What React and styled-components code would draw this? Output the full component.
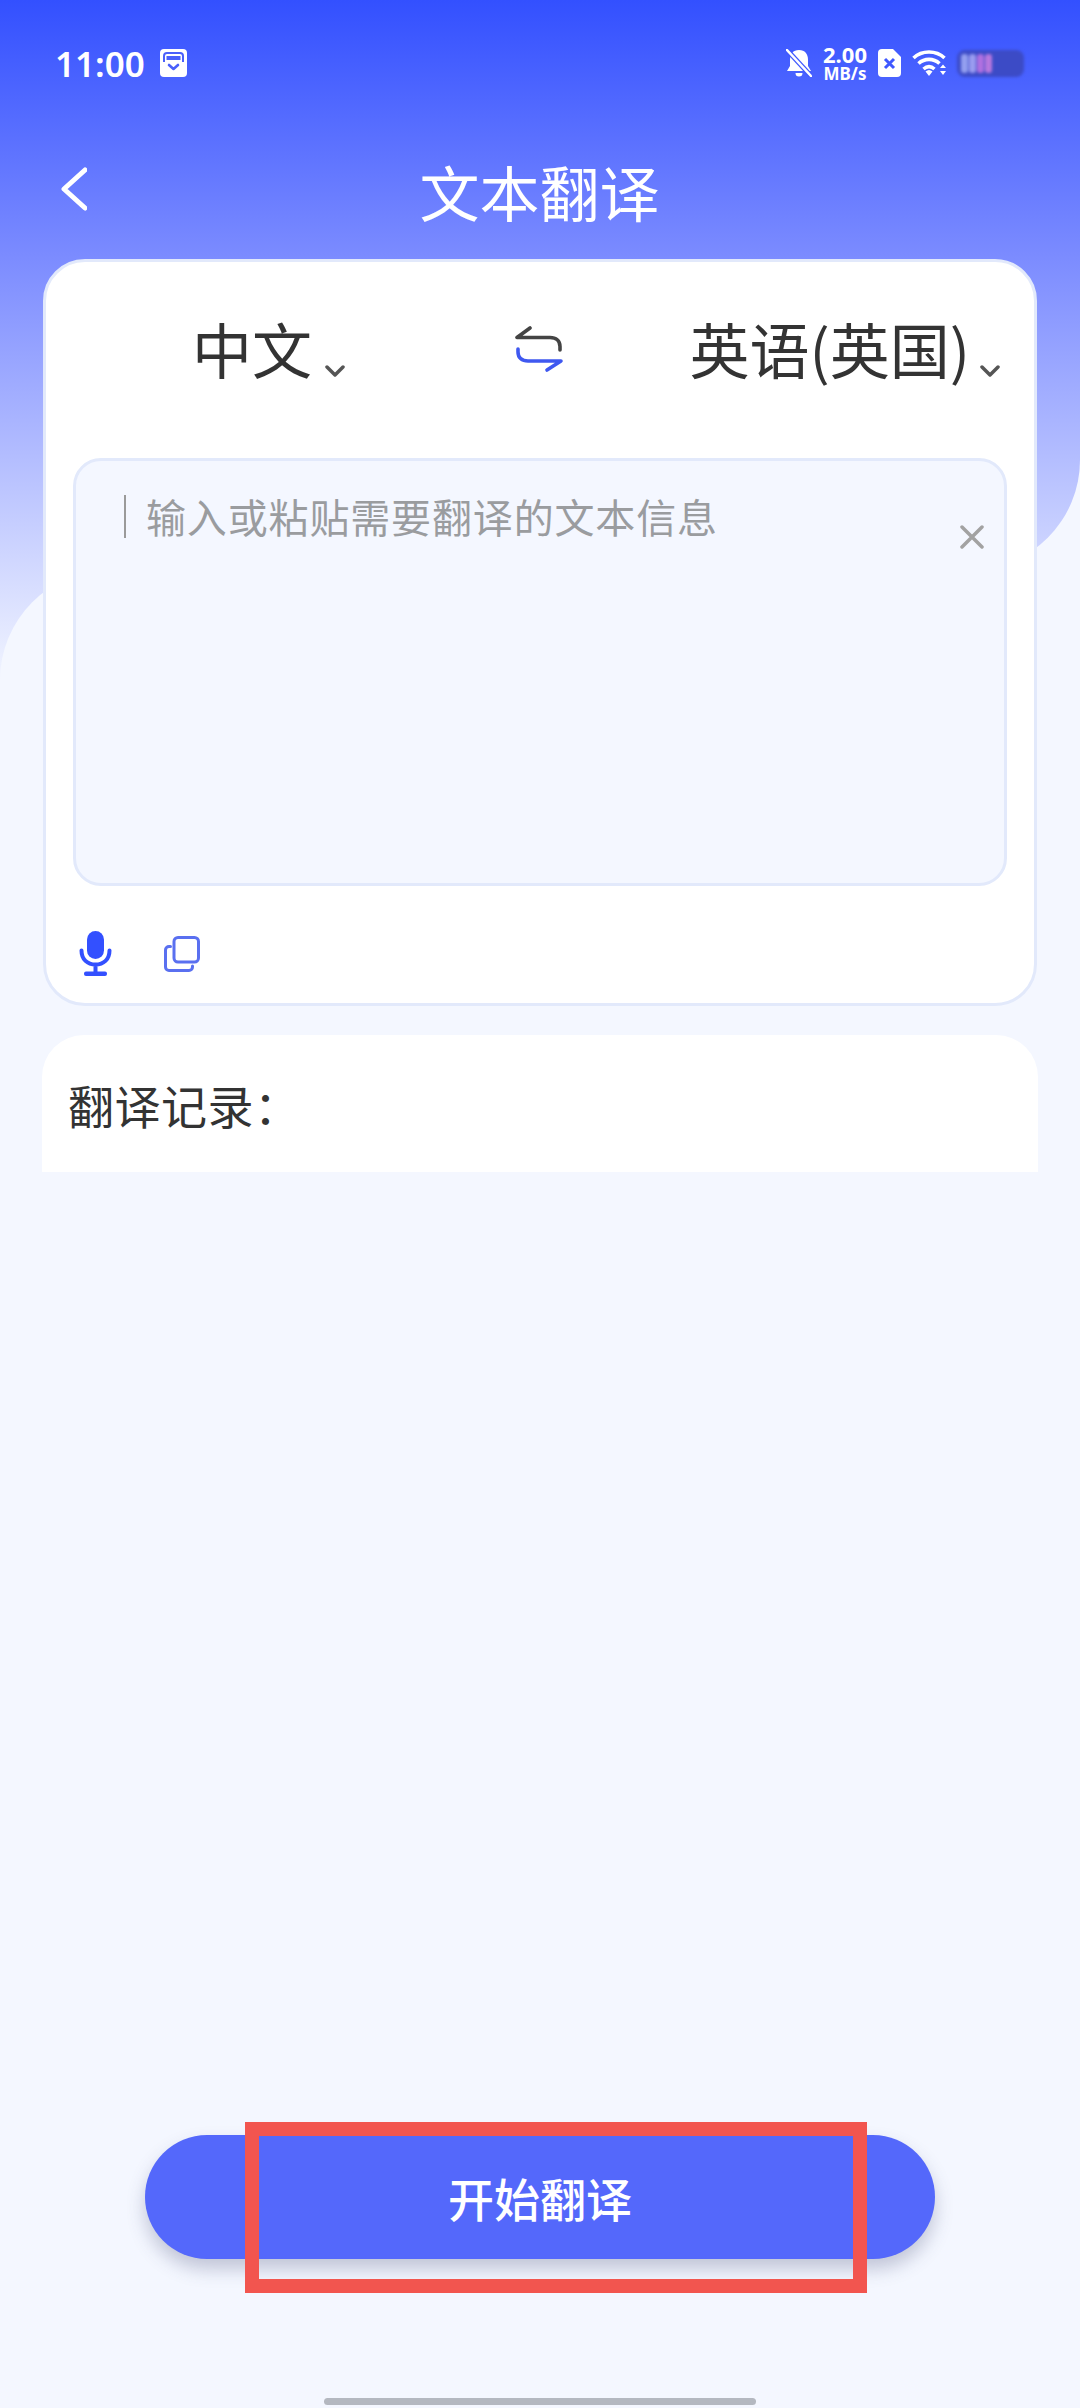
import React from "react";
import styled, { createGlobalStyle } from "styled-components";

const Global = createGlobalStyle`
  html, body { margin: 0; padding: 0; background: #f4f7ff; }
  * { box-sizing: border-box; }
  body { font-family: "Noto Sans CJK SC", "Noto Sans", sans-serif; }
`;

const SKY = "linear-gradient(180deg, #3350ff 0, #7b8bff 255px, #f4f7ff 690px)";

const Page = styled.div`
  position: relative;
  width: 1080px;
  height: 2408px;
  overflow: hidden;
  display: flex;
  flex-direction: column;
  background: #f4f7ff;
`;

const SkyBand = styled.div`
  position: absolute;
  top: 0;
  left: 0;
  width: 100%;
  height: 570px;
  background: ${SKY};
  background-size: 100% 690px;
  background-repeat: no-repeat;
  border-bottom-right-radius: 110px;
`;
const SkyEdge = styled.div`
  position: absolute;
  top: 0;
  left: 0;
  width: 200px;
  height: 690px;
  background: ${SKY};
`;
const LowerPanel = styled.div`
  position: absolute;
  top: 570px;
  left: 0;
  right: 0;
  bottom: 0;
  background: #f4f7ff;
  border-top-left-radius: 110px;
`;

const Content = styled.div`
  position: relative;
  flex: 1;
  display: flex;
  flex-direction: column;
`;

const StatusBar = styled.div`
  height: 126px;
  padding: 0 56px 0 55px;
  display: flex;
  align-items: center;
  color: #fff;
`;
const Clock = styled.span`
  font-family: "Noto Sans", sans-serif;
  font-weight: 600;
  font-size: 35px;
  line-height: 1;
`;
const StatusLeftIcon = styled.svg`
  display: block;
  margin-left: 15px;
`;
const StatusRight = styled.div`
  margin-left: auto;
  display: flex;
  align-items: center;
`;
const Speed = styled.div`
  margin: 0 11px;
  width: 44px;
  display: flex;
  flex-direction: column;
  align-items: center;
  font-family: "Noto Sans", sans-serif;
  font-weight: 700;
  line-height: 1;
`;
const SpeedValue = styled.span`
  font-size: 22px;
  line-height: 21px;
`;
const SpeedUnit = styled.span`
  font-size: 17px;
  line-height: 17px;
`;
const StatusGlyph = styled.svg`
  display: block;
  margin-left: ${(p) => p.$gap || 0}px;
`;
const Battery = styled.div`
  margin-left: 10px;
  width: 67px;
  height: 27px;
  padding: 4px 4px;
  border-radius: 8px;
  background: #3c4bc6;
  display: flex;
  gap: 1px;
  filter: blur(1.4px);
`;
const BatteryCell = styled.span`
  width: 7px;
  border-radius: 3px;
  background: ${(p) => p.$color};
`;

const Header = styled.header`
  height: 133px;
  padding-left: 61px;
  display: grid;
  grid-template-columns: 1fr auto 1fr;
  align-items: center;
`;
const BackIcon = styled.svg`
  display: block;
  margin-bottom: 8px;
`;
const Title = styled.h1`
  margin: 0 0 3px;
  color: #fff;
  font-size: 60px;
  font-weight: 400;
  line-height: 1;
  transform: translateX(-31px);
`;

const Card = styled.section`
  margin: 0 43px;
  height: 747px;
  background: #fff;
  border: 3px solid #e2e9fb;
  border-radius: 42px;
`;
const LangRow = styled.div`
  height: 172px;
  margin-bottom: 24px;
  padding: 0 34px 0 146px;
  display: flex;
  align-items: center;
`;
const Lang = styled.div`
  display: flex;
  align-items: flex-end;
  gap: ${(p) => p.$gap}px;
  color: #333;
  font-size: 60px;
  line-height: 70px;
`;
const LangChevron = styled.svg`
  display: block;
  margin-bottom: 6px;
`;
const SwapIcon = styled.svg`
  display: block;
  margin: 2px auto 0 170px;
`;
const InputBox = styled.div`
  margin: 0 27px;
  height: 428px;
  padding: 34px 20px 0 48px;
  background: #f4f7ff;
  border: 3px solid #e2e9fb;
  border-radius: 28px;
  display: flex;
  align-items: flex-start;
`;
const Caret = styled.span`
  width: 2px;
  height: 43px;
  background: #9a9a9a;
`;
const Placeholder = styled.span`
  margin-left: 20px;
  color: #9a9c9f;
  font-size: 40px;
  letter-spacing: 0.85px;
  line-height: 43px;
`;
const ClearIcon = styled.svg`
  display: block;
  margin: 30px 0 0 auto;
`;
const Toolbar = styled.div`
  margin-top: 45px;
  padding-left: 33px;
  display: flex;
  align-items: flex-start;
  gap: 52px;
`;
const ToolIcon = styled.svg`
  display: block;
  margin-top: ${(p) => p.$top || 0}px;
`;

const RecordCard = styled.section`
  margin: 29px 42px 0;
  height: 137px;
  padding: 39px 0 0 26px;
  background: #fff;
  border-radius: 42px 42px 0 0;
`;
const RecordTitle = styled.h2`
  margin: 0;
  color: #333;
  font-size: 46px;
  font-weight: 400;
  line-height: 60px;
  letter-spacing: 0.5px;
`;

const Footer = styled.div`
  margin-top: auto;
  padding-bottom: 3px;
  display: flex;
  flex-direction: column;
  align-items: center;
`;
const StartButton = styled.button`
  position: relative;
  width: 790px;
  height: 124px;
  border: 0;
  padding: 0;
  border-radius: 62px;
  background: #5468fb;
  box-shadow: 0 10px 18px rgba(60, 70, 110, 0.28);
  color: #fff;
  font-family: inherit;
  font-size: 46px;
  font-weight: 500;
  line-height: 1;
`;
const Highlight = styled.span`
  position: absolute;
  left: 100px;
  top: -13px;
  width: 622px;
  height: 171px;
  border: 14px solid #f2554f;
  pointer-events: none;
`;
const HomeBar = styled.div`
  margin-top: 139px;
  width: 432px;
  height: 7px;
  border-radius: 4px;
  background: #b4b8c0;
`;

export default function App() {
  return (
    <Page>
      <Global />
      <SkyEdge />
      <SkyBand />
      <LowerPanel />
      <Content>
        <StatusBar>
          <Clock>11:00</Clock>
          <StatusLeftIcon width="27" height="28" viewBox="0 0 27 28">
            <rect width="27" height="28" rx="4" fill="#fff" />
            <path d="M4 13V7a3 3 0 0 1 3-3h13a3 3 0 0 1 3 3v6" fill="none" stroke="#4a60fb" strokeWidth="2" />
            <rect x="6.5" y="7" width="14" height="4" fill="#4a60fb" />
            <path d="M9 16l4.500 4 4.500-4" fill="none" stroke="#4a60fb" strokeWidth="2.600" strokeLinecap="round" strokeLinejoin="round" />
          </StatusLeftIcon>
          <StatusRight>
            <StatusGlyph width="26" height="28" viewBox="0 0 26 28">
              <path d="M13 1c6 0 9 4 9 10v6l3 5H1l3-5v-6C4 5 7 1 13 1zM9.500 24h7a3.500 3.500 0 0 1-7 0z" fill="#fff" />
              <path d="M1 1l24 26" stroke="#3f58ff" strokeWidth="5" />
              <path d="M0 0l26 28" stroke="#fff" strokeWidth="2.500" />
            </StatusGlyph>
            <Speed>
              <SpeedValue>2.00</SpeedValue>
              <SpeedUnit>MB/s</SpeedUnit>
            </Speed>
            <StatusGlyph width="23" height="28" viewBox="0 0 23 28">
              <path d="M4 0h11l8 8v16a4 4 0 0 1-4 4H4a4 4 0 0 1-4-4V4a4 4 0 0 1 4-4z" fill="#fff" />
              <path d="M7 10l9 9M16 10l-9 9" stroke="#3f58ff" strokeWidth="3" />
            </StatusGlyph>
            <StatusGlyph $gap={11} width="35" height="28" viewBox="0 0 35 28">
              <path d="M1.500 9C10 1 24 1 32.500 9M6.500 14.500c6-5.500 15-5.500 21 0M11.500 20c3.500-3 7.500-3 11 0" fill="none" stroke="#fff" strokeWidth="3.600" />
              <path d="M13.500 22.500c2.500-2 4.500-2 7 0L17 27z" fill="#fff" />
              <path d="M28 19l3-3.500 3 3.500zM28 22h6l-3 4z" fill="#fff" />
            </StatusGlyph>
            <Battery>
              <BatteryCell $color="#949ff0" />
              <BatteryCell $color="#9a9cf0" />
              <BatteryCell $color="#b070e0" />
              <BatteryCell $color="#b878de" />
            </Battery>
          </StatusRight>
        </StatusBar>
        <Header>
          <BackIcon width="26" height="44" viewBox="0 0 26 44">
            <path d="M24 3L3 22l21 19" fill="none" stroke="#fff" strokeWidth="5" strokeLinecap="round" strokeLinejoin="round" />
          </BackIcon>
          <Title>文本翻译</Title>
        </Header>
        <Card>
          <LangRow>
            <Lang $gap={13}>
              中文
              <LangChevron width="20" height="12" viewBox="0 0 20 12">
                <path d="M2 2l8 8 8-8" fill="none" stroke="#555" strokeWidth="3.500" strokeLinecap="round" strokeLinejoin="round" />
              </LangChevron>
            </Lang>
            <SwapIcon width="48" height="47" viewBox="0 0 48 47">
              <path d="M15 2L2 11.500h33c6 0 10 3 10 9V24" fill="none" stroke="#444" strokeWidth="3.600" strokeLinecap="round" strokeLinejoin="round" />
              <path d="M3 23v3c0 6 4 9 10 9h33L32 44" fill="none" stroke="#3f58f0" strokeWidth="3.600" strokeLinecap="round" strokeLinejoin="round" />
            </SwapIcon>
            <Lang $gap={10}>
              英语(英国)
              <LangChevron width="20" height="12" viewBox="0 0 20 12">
                <path d="M2 2l8 8 8-8" fill="none" stroke="#555" strokeWidth="3.500" strokeLinecap="round" strokeLinejoin="round" />
              </LangChevron>
            </Lang>
          </LangRow>
          <InputBox>
            <Caret />
            <Placeholder>输入或粘贴需要翻译的文本信息</Placeholder>
            <ClearIcon width="24" height="24" viewBox="0 0 24 24">
              <path d="M2 2l20 20M22 2L2 22" stroke="#a2a2a2" strokeWidth="3.500" strokeLinecap="round" />
            </ClearIcon>
          </InputBox>
          <Toolbar>
            <ToolIcon width="33" height="45" viewBox="0 0 33 45">
              <rect x="8" y="0" width="17" height="28" rx="8.500" fill="#3350ff" />
              <path d="M2.500 19.500c0 9 6 14 14 14s14-5 14-14M16.500 33.500V42" fill="none" stroke="#3350ff" strokeWidth="4" strokeLinecap="round" />
              <rect x="5" y="40.500" width="23" height="4.500" rx="2" fill="#3350ff" />
            </ToolIcon>
            <ToolIcon $top={5} width="36" height="36" viewBox="0 0 36 36">
              <rect x="10" y="1.500" width="24.500" height="24.500" rx="4" fill="none" stroke="#5a70f0" strokeWidth="3" />
              <path d="M6.500 10.500H5a3.500 3.500 0 0 0-3.500 3.500v17A3.500 3.500 0 0 0 5 34.500h20a3.500 3.500 0 0 0 3.500-3.500v-1" fill="none" stroke="#5a70f0" strokeWidth="3" strokeLinecap="round" />
            </ToolIcon>
          </Toolbar>
        </Card>
        <RecordCard>
          <RecordTitle>翻译记录：</RecordTitle>
        </RecordCard>
        <Footer>
          <StartButton>
            开始翻译
            <Highlight />
          </StartButton>
          <HomeBar />
        </Footer>
      </Content>
    </Page>
  );
}
